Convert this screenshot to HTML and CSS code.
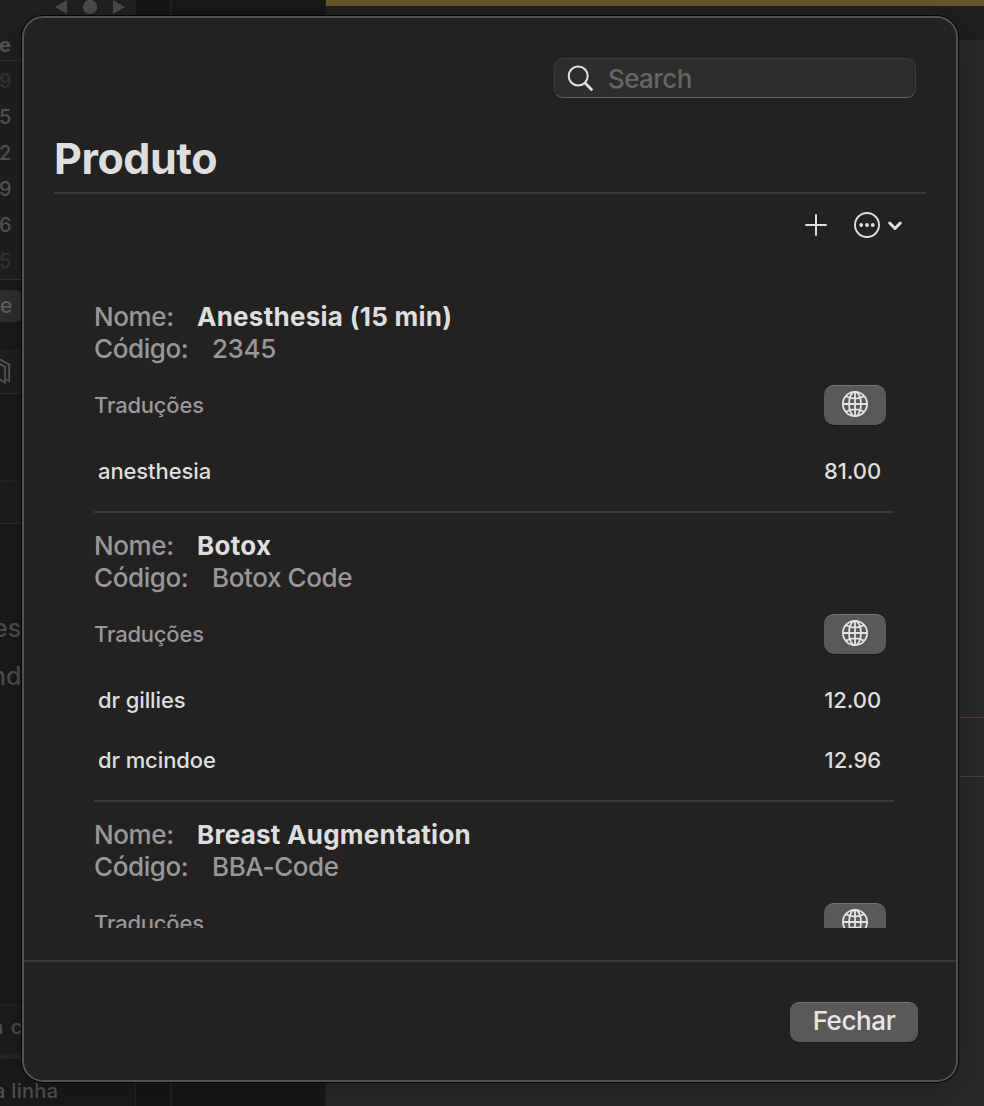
FILE: index.html
```html
<!DOCTYPE html>
<html lang="pt">
<head>
<meta charset="utf-8">
<title>Produto</title>
<link rel="stylesheet" href="styles.css">
</head>
<body>
<svg width="0" height="0" class="defs">
  <symbol id="globe" viewBox="0 0 26 26">
    <g fill="none" stroke="#e4e4e3" stroke-width="1.8">
      <circle cx="13" cy="13" r="12.1"/>
      <ellipse cx="13" cy="13" rx="6" ry="12.1"/>
      <path d="M13 .8v24.4M.8 13h24.4M4 5.3c5 3 13 3 18 0M4 20.7c5-3 13-3 18 0"/>
    </g>
  </symbol>
</svg>
<div class="window">
  <aside class="sidebar">
    <div class="transport">
      <svg width="72" height="16" viewBox="0 0 72 16" fill="#4b4b4b"><path d="M0 7 12 0v14zM58 0l12 7-12 7z"/><circle cx="35" cy="7" r="7.2"/></svg>
    </div>
    <div class="calendar">
      <span class="day head">e</span>
      <span class="day dim">9</span>
      <span class="day">5</span>
      <span class="day">2</span>
      <span class="day">9</span>
      <span class="day">6</span>
      <span class="day dim">5</span>
    </div>
    <div class="tab-row"><span class="tab">e</span></div>
    <div class="map-row">
      <svg width="13" height="28" viewBox="0 0 13 28" fill="none" stroke="#5a5a5a" stroke-width="1.7"><path d="M-1 1 9.200 6.500v16.500l-4.200-2v3.500l-6-3.500M-1 5.500l6 3.500v12"/></svg>
    </div>
    <div class="blank"></div>
    <div class="band"></div>
    <div class="names"><span>es</span><span>nd</span></div>
    <div class="column-row"><span>a c</span></div>
    <div class="line-row"><span>a linha</span></div>
  </aside>
  <div class="gutter"></div>
  <div class="strip"></div>
  <main class="content">
    <div class="accent"></div>
    <div class="toolbar"></div>
    <div class="canvas"><div class="event"></div></div>
  </main>
</div>

<section class="dialog">
  <header class="top">
    <div class="search">
      <svg width="27" height="27" viewBox="0 0 27 27" fill="none" stroke="#e2e2e1" stroke-linecap="round"><circle cx="11.200" cy="11" r="9.500" stroke-width="2"/><path d="M18.300 18.200 24.500 24.500" stroke-width="2.800"/></svg>
      <span class="placeholder">Search</span>
    </div>
    <h1 class="title">Produto</h1>
  </header>
  <div class="actions">
    <svg width="22" height="22" viewBox="0 0 22 22" stroke="#dfdfde" stroke-width="2" stroke-linecap="round"><path d="M11 1v20M1 11h20"/></svg>
    <svg class="more" width="50" height="26" viewBox="0 0 50 26"><circle cx="13" cy="13" r="12" fill="none" stroke="#dfdfde" stroke-width="1.900"/><g fill="#dfdfde"><circle cx="7.200" cy="13" r="1.900"/><circle cx="13" cy="13" r="1.900"/><circle cx="18.800" cy="13" r="1.900"/></g><path d="M35.700 11 41 16.500l5.300-5.500" fill="none" stroke="#dfdfde" stroke-width="3" stroke-linecap="round" stroke-linejoin="round"/></svg>
  </div>
  <div class="list">
    <article class="item">
      <div class="field"><span class="label nome">Nome:</span><strong class="name">Anesthesia (15 min)</strong></div>
      <div class="field"><span class="label codigo">Código:</span><span class="code">2345</span></div>
      <div class="translations"><span>Traduções</span><button class="globe"><svg width="26" height="26"><use href="#globe"/></svg></button></div>
      <div class="row"><span>anesthesia</span><span class="price">81.00</span></div>
    </article>
    <article class="item">
      <div class="field"><span class="label nome">Nome:</span><strong class="name">Botox</strong></div>
      <div class="field"><span class="label codigo">Código:</span><span class="code">Botox Code</span></div>
      <div class="translations"><span>Traduções</span><button class="globe"><svg width="26" height="26"><use href="#globe"/></svg></button></div>
      <div class="row"><span>dr gillies</span><span class="price">12.00</span></div>
      <div class="row"><span>dr mcindoe</span><span class="price">12.96</span></div>
    </article>
    <article class="item">
      <div class="field"><span class="label nome">Nome:</span><strong class="name">Breast Augmentation</strong></div>
      <div class="field"><span class="label codigo">Código:</span><span class="code">BBA-Code</span></div>
      <div class="translations"><span>Traduções</span><button class="globe"><svg width="26" height="26"><use href="#globe"/></svg></button></div>
    </article>
  </div>
  <footer class="footer"><button class="close">Fechar</button></footer>
</section>
</body>
</html>
```

FILE: styles.css
```css
* { box-sizing: border-box; }
body {
  margin: 0;
  width: 984px;
  height: 1106px;
  overflow: hidden;
  background: #191919;
  font-family: Inter, "Liberation Sans", sans-serif;
}
.defs { position: absolute; }

/* Dimmed window behind the dialog */
.window { display: flex; height: 1106px; color: #545454; }
.sidebar { width: 135px; display: flex; flex-direction: column; background: #191918; white-space: nowrap; overflow: hidden; }
.transport { height: 27px; padding-left: 55px; background: #202020; flex: none; }
.transport svg { display: block; }
.calendar { height: 253px; display: flex; flex-direction: column; background: #1f1f1f; border-bottom: 1px solid #323232; flex: none; }
.day { height: 36px; line-height: 36px; font-size: 20px; font-weight: 500; margin-left: -1px; }
.day.head { height: 34px; line-height: 36px; font-weight: 700; border-bottom: 1px solid #2d2d2d; margin-bottom: 2px; }
.day.dim { color: #333; }
.tab-row { height: 70px; padding-top: 10px; flex: none; }
.tab { display: block; width: 21px; height: 32px; line-height: 32px; background: #2f2f30; border-radius: 0 5px 5px 0; color: #5e5e5e; font-size: 21px; font-weight: 500; }
.map-row { height: 44px; padding-top: 7px; border-top: 1px solid #252525; border-bottom: 1px solid #2d2d2d; background: #1e1e1e; flex: none; }
.blank { height: 86px; flex: none; }
.band { height: 44px; background: #1d1d1e; border-top: 1px solid #242424; border-bottom: 1px solid #2b2b2c; flex: none; }
.names { height: 480px; padding-top: 80px; display: flex; flex-direction: column; font-size: 25px; font-weight: 450; flex: none; color: #4d4d4d; }
.names span { height: 48px; line-height: 48px; }
.names span:last-child { margin-left: -9px; }
.names span:first-child { margin-left: -7px; }
.column-row { height: 55px; line-height: 44px; font-size: 20px; font-weight: 500; border-top: 1px solid #252525; border-bottom: 5px solid #242423; background: #1d1c1b; flex: none; color: #4e4e4e; }
.column-row span { margin-left: -8px; word-spacing: 2px; }
.line-row { flex: 1; line-height: 64px; font-size: 20px; font-weight: 450; letter-spacing: .3px; color: #515151; }
.line-row span { margin-left: -6px; }
.gutter { width: 37px; background: #171717; border-left: 1px solid #222; border-right: 2px solid #222; }
.strip { width: 154px; background: #181817; border-right: 1px solid #202020; }
.content { flex: 1; display: flex; flex-direction: column; }
.accent { height: 6px; background: #645828; }
.toolbar { height: 34px; background: #1f1f1d; }
.canvas { flex: 1; background: #292928; padding-top: 677px; }
.event { height: 60px; border-top: 1px solid #5a3835; border-bottom: 1px solid #404142; }

/* Dialog */
.dialog {
  position: absolute;
  left: 22px;
  top: 16px;
  width: 936px;
  height: 1066px;
  display: flex;
  flex-direction: column;
  background: #232220;
  border: 2px solid #52524f;
  border-radius: 21px;
  box-shadow: 0 0 0 1px #050505, 0 8px 36px rgba(0, 0, 0, .25);
  color: #dedede;
}
.top { height: 176px; margin: 0 30px; padding-top: 40px; border-bottom: 2px solid #3a3a38; flex: none; }
.search {
  width: 362px;
  height: 40px;
  margin: 0 10px 0 auto;
  padding-left: 12px;
  display: flex;
  align-items: center;
  gap: 14px;
  background: #2e2d2b;
  border: 1px solid #3c3c3a;
  border-bottom-color: #636361;
  border-radius: 9px;
}
.placeholder { font-size: 26px; font-weight: 450; letter-spacing: -.6px; color: #656563; }
.title { margin: 35px 0 0; font-size: 43px; line-height: 50px; letter-spacing: -.45px; font-weight: 700; }
.actions { height: 63px; padding: 0 52px 2px 0; display: flex; justify-content: flex-end; align-items: center; gap: 27px; flex: none; }
.list { height: 671px; margin: 0 62px 0 70px; padding-top: 44px; overflow: hidden; flex: none; }
.item { border-bottom: 2px solid #3a3a38; padding-bottom: 10px; margin-bottom: 17px; }
.field { height: 32px; line-height: 32px; font-size: 26px; font-weight: 450; letter-spacing: -.4px; color: #98979c; display: flex; }
.label.nome { width: 103px; }
.label.codigo { width: 118px; }
.name { color: #dedede; font-weight: 700; letter-spacing: .26px; }
.translations { margin: 20px 8px 16px 0; height: 40px; display: flex; justify-content: space-between; align-items: center; font-size: 22px; font-weight: 450; letter-spacing: -.2px; color: #98979c; }
.row { height: 60px; padding: 0 13px 0 4px; display: flex; justify-content: space-between; align-items: center; font-size: 22px; font-weight: 500; letter-spacing: -.1px; }
.globe, .close { border: 0; border-top: 1px solid #767674; background: #5a5957; color: #e6e6e5; box-shadow: 0 1px 1px rgba(0, 0, 0, .3); font-family: inherit; }
.globe { width: 62px; height: 40px; padding: 0 0 3px; display: flex; align-items: center; justify-content: center; border-radius: 10px; }
.footer { margin-top: 32px; flex: 1; border-top: 2px solid #3a3a38; padding: 40px 38px 0; display: flex; justify-content: flex-end; }
.close { width: 128px; height: 40px; padding: 0 0 4px; border-radius: 9px; font-size: 26px; font-weight: 450; letter-spacing: -.4px; }
```
